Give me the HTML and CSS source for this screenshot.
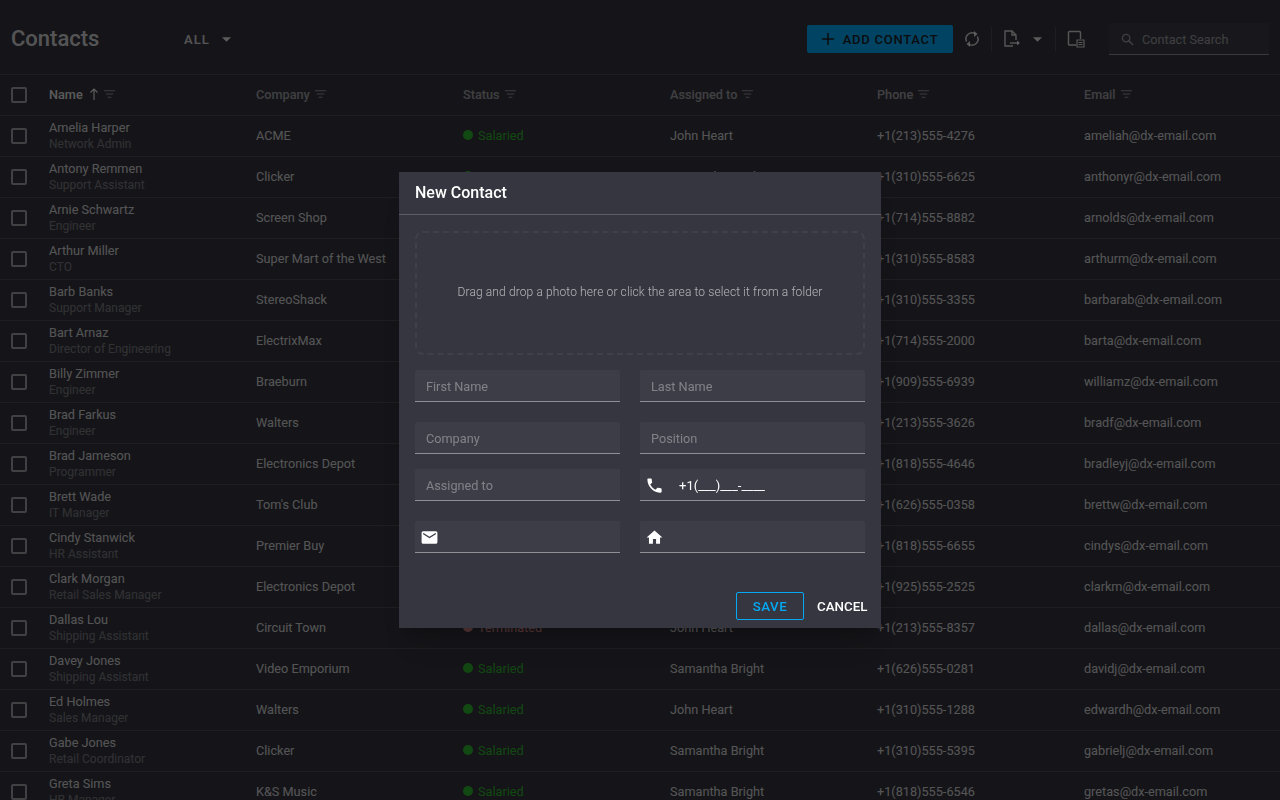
FILE: index.html
```html
<!DOCTYPE html>
<html lang="en">
<head>
  <meta charset="UTF-8" />
  <title>Contacts</title>
  <link rel="stylesheet" href="styles.css">
</head>
<body>

  <svg class="icon-defs" width="0" height="0">
    <symbol id="i-filter" viewBox="0 0 14 10"><path d="M1 1.500h12M3 5h8M5 8.500h4" fill="none" stroke="currentColor"/></symbol>
    <symbol id="i-caret" viewBox="0 0 10 5"><path d="M0 0h10L5 5z" fill="currentColor"/></symbol>
  </svg>

  <header class="toolbar">
    <h1 class="title">Contacts</h1>
    <button class="filter-select">ALL <svg class="caret"><use href="#i-caret"/></svg></button>
    <div class="toolbar-right">
      <button class="btn-add">
        <svg class="plus" viewBox="0 0 12 12"><path d="M6 0v12M0 6h12" stroke="currentColor" stroke-width="1.500"/></svg>
        ADD CONTACT
      </button>
      <svg class="tool tool-sync" viewBox="0 0 18 18"><path d="M3.600 11.500A6 6 0 0 1 12.500 4M14.400 6.500A6 6 0 0 1 5.500 14" fill="none" stroke="currentColor" stroke-width="1.500"/><path d="M11 1l3.600 3-3.600 3zM7 17l-3.600-3L7 11z" fill="currentColor"/></svg>
      <span class="sep"></span>
      <svg class="tool tool-export" viewBox="0 0 18 18"><path d="M10 16H2V1h7l4 4v5M9 1v4h4" fill="none" stroke="currentColor" stroke-width="1.400"/><path d="M7 13h9" stroke="currentColor" stroke-width="1.400"/><path d="M14 10.500l3 2.500-3 2.500z" fill="currentColor"/></svg>
      <svg class="caret caret-export"><use href="#i-caret"/></svg>
      <span class="sep"></span>
      <svg class="tool tool-columns" viewBox="0 0 18 18"><path d="M9 15H2.500a1 1 0 0 1-1-1V2.500a1 1 0 0 1 1-1h10a1 1 0 0 1 1 1V9" fill="none" stroke="currentColor" stroke-width="1.400"/><path d="M10 10h7v7h-7zM11.500 12.500h4M11.500 14.500h4" fill="none" stroke="currentColor" stroke-width="1.200"/></svg>
      <div class="search">
        <svg class="search-icon" viewBox="0 0 14 14"><circle cx="5.500" cy="5.500" r="4" fill="none" stroke="currentColor" stroke-width="1.400"/><path d="M8.500 8.500l4.500 4.500" stroke="currentColor" stroke-width="1.600"/></svg>
        <span>Contact Search</span>
      </div>
    </div>
  </header>

  <main class="grid">
    <div class="row row-head">
      <div class="cell cell-check"><span class="check"></span></div>
      <div class="cell head-sorted">Name <span class="sort-arrow">
        <svg viewBox="0 0 10 12"><path d="M5 12V1M1.500 4.500L5 1l3.500 3.500" fill="none" stroke="currentColor" stroke-width="1.200"/></svg></span><svg class="filter"><use href="#i-filter"/></svg></div>
      <div class="cell">Company <svg class="filter"><use href="#i-filter"/></svg></div>
      <div class="cell">Status <svg class="filter"><use href="#i-filter"/></svg></div>
      <div class="cell">Assigned to <svg class="filter"><use href="#i-filter"/></svg></div>
      <div class="cell">Phone <svg class="filter"><use href="#i-filter"/></svg></div>
      <div class="cell">Email <svg class="filter"><use href="#i-filter"/></svg></div>
    </div>
    <div id="rows"></div>
  </main>

  <div class="overlay"></div>

  <section class="dialog">
    <h2 class="dialog-title">New Contact</h2>
    <div class="dialog-body">
      <div class="dropzone">Drag and drop a photo here or click the area to select it from a folder</div>

      <div class="form-row form-row-first">
        <div class="field"><span class="placeholder">First Name</span></div>
        <div class="field"><span class="placeholder">Last Name</span></div>
      </div>
      <div class="form-row form-row-second">
        <div class="field"><span class="placeholder">Company</span></div>
        <div class="field"><span class="placeholder">Position</span></div>
      </div>
      <div class="form-row form-row-third">
        <div class="field"><span class="placeholder">Assigned to</span></div>
        <div class="field field-icon">
          <svg viewBox="0 0 24 24"><path d="M6.620 10.790c1.440 2.830 3.760 5.140 6.590 6.590l2.200-2.200c.27-.27.67-.36 1.020-.24 1.120.37 2.330.57 3.570.57.55 0 1 .45 1 1V20c0 .55-.45 1-1 1-9.390 0-17-7.610-17-17 0-.55.45-1 1-1h3.500c.55 0 1 .45 1 1 0 1.250.2 2.450.57 3.570.11.35.03.74-.25 1.020l-2.200 2.200z"/></svg>
          <span class="value">+1(___)___-____</span>
        </div>
      </div>
      <div class="form-row form-row-fourth">
        <div class="field field-icon">
          <svg viewBox="0 0 24 24"><path d="M20 4H4c-1.100 0-1.990.9-1.990 2L2 18c0 1.100.9 2 2 2h16c1.100 0 2-.9 2-2V6c0-1.100-.9-2-2-2zm0 4l-8 5-8-5V6l8 5 8-5v2z"/></svg>
        </div>
        <div class="field field-icon">
          <svg viewBox="0 0 24 24"><path d="M10 20v-6h4v6h5v-8h3L12 3 2 12h3v8z"/></svg>
        </div>
      </div>
    </div>
    <footer class="dialog-actions">
      <button class="btn-save">SAVE</button>
      <button class="btn-cancel">CANCEL</button>
    </footer>
  </section>

  <script src="rows.js"></script>
</body>
</html>
```

FILE: styles.css
```css
* {
  box-sizing: border-box;
}

body {
  margin: 0;
  height: 800px;
  overflow: hidden;
  background-color: #363640;
  color: rgba(255, 255, 255, 0.8);
  font-family: Roboto, sans-serif;
  font-size: 12.7px;
}

button {
  font-family: inherit;
  border: none;
  background: none;
  padding: 0;
  color: inherit;
}

.icon-defs {
  position: absolute;
}

.toolbar {
  height: 75px;
  display: flex;
  align-items: center;
  padding: 4px 11px 0;
  border-bottom: 1px solid rgba(255, 255, 255, 0.12);
}

.title {
  margin: 0 0 2px;
  width: 173px;
  font-size: 22px;
  font-weight: 500;
}

.filter-select {
  display: flex;
  align-items: center;
  gap: 12px;
  font-size: 13px;
  font-weight: 500;
  letter-spacing: 1.1px;
}

.caret {
  width: 9px;
  height: 5px;
  color: rgba(255, 255, 255, 0.87);
}

.toolbar-right {
  margin-left: auto;
  display: flex;
  align-items: center;
}

.btn-add {
  width: 146px;
  height: 28px;
  display: flex;
  align-items: center;
  justify-content: center;
  gap: 9px;
  border-radius: 2px;
  background-color: #03a9f4;
  color: #1f1f26;
  font-size: 13px;
  font-weight: 500;
  letter-spacing: 0.75px;
}

.plus {
  width: 12px;
  height: 12px;
}

.tool {
  width: 18px;
  height: 18px;
  color: rgba(255, 255, 255, 0.8);
}

.tool-sync {
  margin-left: 10px;
}

.sep {
  width: 1px;
  height: 24px;
  background-color: rgba(255, 255, 255, 0.12);
}

.tool-sync + .sep {
  margin: 0 11px 0 10px;
}

.caret-export {
  margin: 0 13px 0 12px;
}

.caret-export + .sep {
  margin-right: 11px;
}

.search {
  width: 160px;
  height: 32px;
  margin-left: 24px;
  display: flex;
  align-items: center;
  gap: 8px;
  padding: 2px 0 0 12px;
  background-color: rgba(255, 255, 255, 0.04);
  border-bottom: 1px solid rgba(255, 255, 255, 0.42);
  color: rgba(255, 255, 255, 0.5);
}

.search-icon {
  width: 13px;
  height: 13px;
}

.row {
  display: grid;
  grid-template-columns: 49px repeat(5, 207px) 1fr;
  height: 41px;
  border-bottom: 1px solid rgba(255, 255, 255, 0.12);
}

.row-head {
  color: rgba(255, 255, 255, 0.54);
  font-weight: 500;
}

.cell {
  display: flex;
  align-items: center;
  min-width: 0;
  padding-bottom: 2px;
  white-space: nowrap;
}

.cell-check {
  padding-bottom: 0;
}

.cell-name {
  flex-direction: column;
  align-items: flex-start;
  justify-content: center;
  padding-bottom: 0;
  line-height: 16px;
}

.cell-name small {
  font-size: 12px;
  color: rgba(255, 255, 255, 0.36);
}

.head-sorted {
  color: rgba(255, 255, 255, 0.87);
}

.check {
  width: 16px;
  height: 16px;
  margin-left: 11px;
  border: 2px solid rgba(255, 255, 255, 0.54);
  border-radius: 2px;
}

.sort-arrow {
  display: flex;
  margin-left: 6px;
  width: 10px;
}

.filter {
  width: 13px;
  height: 10px;
  margin-left: 4px;
  color: rgba(255, 255, 255, 0.54);
}

.dot {
  width: 10px;
  height: 10px;
  margin-right: 5px;
  border-radius: 50%;
  background-color: currentColor;
}

.status-salaried,
.status-commission {
  color: #2eb52c;
}

.status-terminated {
  color: #de8e8c;
}

.overlay {
  position: fixed;
  inset: 0;
  background-color: rgba(0, 0, 0, 0.6);
}

.dialog {
  position: fixed;
  left: 399px;
  top: 172px;
  width: 482px;
  height: 456px;
  background-color: #363640;
  box-shadow: 0 11px 15px -7px rgba(0, 0, 0, 0.2), 0 24px 38px 3px rgba(0, 0, 0, 0.14);
}

.dialog-title {
  margin: 0;
  height: 43px;
  padding: 0 16px 2px;
  display: flex;
  align-items: center;
  border-bottom: 1px solid rgba(255, 255, 255, 0.2);
  font-size: 16px;
  font-weight: 500;
  color: #fff;
}

.dialog-body {
  padding: 16px 16px 0;
}

.dropzone {
  height: 124px;
  display: flex;
  align-items: center;
  justify-content: center;
  padding-bottom: 2px;
  border: 2px dashed rgba(255, 255, 255, 0.05);
  border-radius: 8px;
  font-size: 12px;
  font-weight: 300;
  letter-spacing: 0.12px;
  color: rgba(255, 255, 255, 0.62);
}

.form-row {
  display: grid;
  grid-template-columns: 205px 225px;
  gap: 20px;
}

.form-row-first {
  margin-top: 15px;
}

.form-row-second {
  margin-top: 20px;
}

.form-row-third {
  margin-top: 15px;
}

.form-row-fourth {
  margin-top: 20px;
}

.field {
  height: 32px;
  display: flex;
  align-items: center;
  padding: 2px 11px 0;
  background-color: rgba(255, 255, 255, 0.04);
  border-bottom: 1px solid rgba(255, 255, 255, 0.42);
  border-radius: 2px 2px 0 0;
}

.placeholder {
  color: rgba(255, 255, 255, 0.35);
}

.field-icon {
  padding-left: 5px;
}

.field-icon svg {
  width: 19px;
  height: 19px;
  fill: #fff;
}

.value {
  margin-left: 15px;
  font-size: 13px;
  color: #fff;
}

.dialog-actions {
  position: absolute;
  right: 14px;
  bottom: 8px;
  display: flex;
  align-items: center;
  gap: 13px;
  font-size: 13px;
  font-weight: 500;
}

.btn-save {
  width: 68px;
  height: 28px;
  border: 1px solid #03a9f4;
  border-radius: 2px;
  color: #03a9f4;
  font-weight: 500;
  letter-spacing: 0.5px;
}

.btn-cancel {
  width: 50px;
  color: #fff;
  font-weight: 500;
  white-space: nowrap;
}
```

FILE: rows.js
```js
const contacts = [
  ['Amelia Harper', 'Network Admin', 'ACME', 'Salaried', 'John Heart', '+1(213)555-4276', 'ameliah@dx-email.com'],
  ['Antony Remmen', 'Support Assistant', 'Clicker', 'Commission', 'Samantha Bright', '+1(310)555-6625', 'anthonyr@dx-email.com'],
  ['Arnie Schwartz', 'Engineer', 'Screen Shop', 'Salaried', 'John Heart', '+1(714)555-8882', 'arnolds@dx-email.com'],
  ['Arthur Miller', 'CTO', 'Super Mart of the West', 'Salaried', 'Samantha Bright', '+1(310)555-8583', 'arthurm@dx-email.com'],
  ['Barb Banks', 'Support Manager', 'StereoShack', 'Salaried', 'John Heart', '+1(310)555-3355', 'barbarab@dx-email.com'],
  ['Bart Arnaz', 'Director of Engineering', 'ElectrixMax', 'Salaried', 'John Heart', '+1(714)555-2000', 'barta@dx-email.com'],
  ['Billy Zimmer', 'Engineer', 'Braeburn', 'Salaried', 'Samantha Bright', '+1(909)555-6939', 'williamz@dx-email.com'],
  ['Brad Farkus', 'Engineer', 'Walters', 'Salaried', 'John Heart', '+1(213)555-3626', 'bradf@dx-email.com'],
  ['Brad Jameson', 'Programmer', 'Electronics Depot', 'Salaried', 'John Heart', '+1(818)555-4646', 'bradleyj@dx-email.com'],
  ['Brett Wade', 'IT Manager', "Tom's Club", 'Salaried', 'Samantha Bright', '+1(626)555-0358', 'brettw@dx-email.com'],
  ['Cindy Stanwick', 'HR Assistant', 'Premier Buy', 'Salaried', 'John Heart', '+1(818)555-6655', 'cindys@dx-email.com'],
  ['Clark Morgan', 'Retail Sales Manager', 'Electronics Depot', 'Salaried', 'John Heart', '+1(925)555-2525', 'clarkm@dx-email.com'],
  ['Dallas Lou', 'Shipping Assistant', 'Circuit Town', 'Terminated', 'John Heart', '+1(213)555-8357', 'dallas@dx-email.com'],
  ['Davey Jones', 'Shipping Assistant', 'Video Emporium', 'Salaried', 'Samantha Bright', '+1(626)555-0281', 'davidj@dx-email.com'],
  ['Ed Holmes', 'Sales Manager', 'Walters', 'Salaried', 'John Heart', '+1(310)555-1288', 'edwardh@dx-email.com'],
  ['Gabe Jones', 'Retail Coordinator', 'Clicker', 'Salaried', 'Samantha Bright', '+1(310)555-5395', 'gabrielj@dx-email.com'],
  ['Greta Sims', 'HR Manager', 'K&S Music', 'Salaried', 'Samantha Bright', '+1(818)555-6546', 'gretas@dx-email.com']
];

const rows = document.getElementById('rows');

for (const [name, position, company, status, assigned, phone, email] of contacts) {
  const row = document.createElement('div');
  row.className = 'row';
  row.innerHTML = `
    <div class="cell cell-check"><span class="check"></span></div>
    <div class="cell cell-name">${name}<small>${position}</small></div>
    <div class="cell">${company.replace('&', '&amp;')}</div>
    <div class="cell status-${status.toLowerCase()}"><span class="dot"></span>${status}</div>
    <div class="cell">${assigned}</div>
    <div class="cell">${phone}</div>
    <div class="cell">${email}</div>
  `;
  rows.appendChild(row);
}
```
